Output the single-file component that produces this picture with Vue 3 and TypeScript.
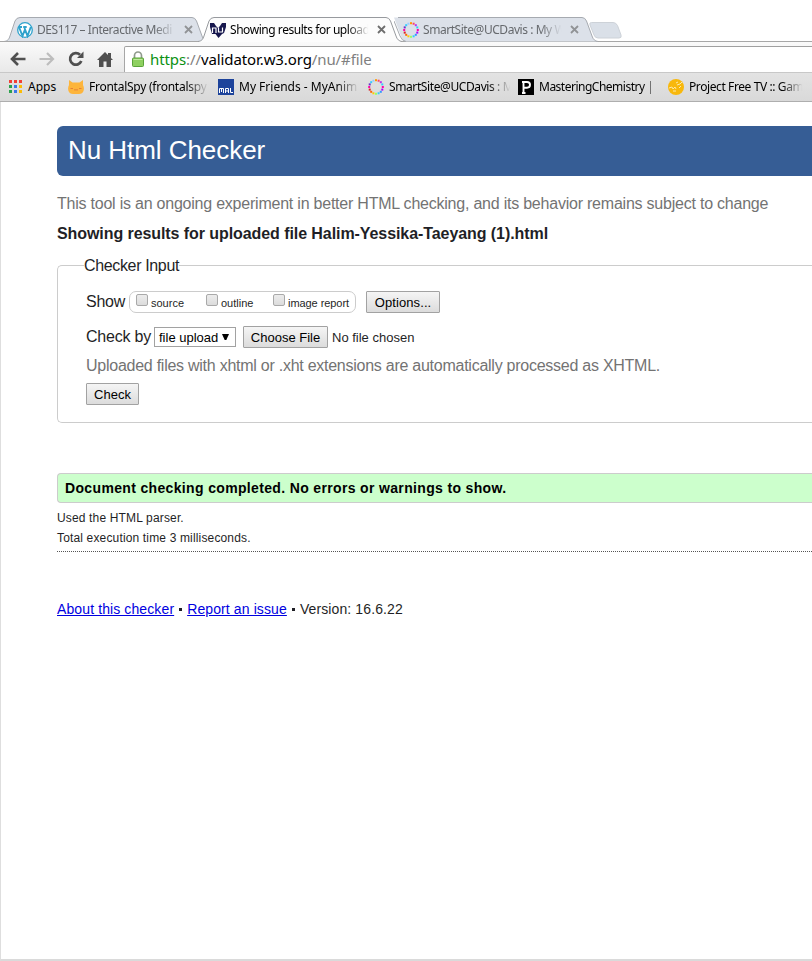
<script setup lang="ts">
const colors = ['#f0a', '#a0f', '#39f', '#3cf', '#9f6', '#fc0', '#f60', '#d22', '#f0a', '#63c', '#3cf', '#9cf', '#f90', '#f46', '#b3e', '#3cf']
const dots = colors.map((c, i) => ({ c, x: 8 + 6.8 * Math.cos((i * Math.PI) / 8), y: 8 + 6.8 * Math.sin((i * Math.PI) / 8) }))
const apps = ['#f33f34', '#f33f34', '#f33f34', '#2ba24c', '#3b78e7', '#fbbc05', '#2ba24c', '#3b78e7', '#fbbc05']
const bookmarks = [
  { kind: 'apps', label: 'Apps' },
  { kind: 'cat', label: 'FrontalSpy (frontalspy' },
  { kind: 'mal', label: 'My Friends - MyAnim' },
  { kind: 'ring', label: 'SmartSite@UCDavis : M' },
  { kind: 'p', label: 'MasteringChemistry |' },
  { kind: 'tv', label: 'Project Free TV :: Gam' },
]
</script>

<template>
  <div class="window">
    <header class="chrome">
      <div class="tabs">
        <div class="tab idle first">
          <svg class="shape" width="204" height="25" viewBox="0 0 204 25"><path d="M0 24.5C4 24 5 22 6 19L11 4Q12.5 .5 16 .5H188Q191 .5 192.5 4L198 19Q199.5 24 204 24.5" fill="#dce1e9" stroke="#a6aab0" /></svg>
          <svg class="fav" viewBox="0 0 16 16"><circle cx="8" cy="8" r="7.3" fill="#fff" stroke="#2ea2cc" stroke-width="1.3" /><path d="M2 5L5.5 14L8 7.5L10.5 14L13.8 5M1.800 5H5M6.200 5H9.700M8 7L7.200 5" fill="none" stroke="#2ea2cc" stroke-width="1.9" /></svg>
          <div class="tt"><span>DES117 – Interactive Medi</span></div>
          <svg class="x" viewBox="0 0 9 9"><path d="M1 1L8 8M8 1L1 8" /></svg>
        </div>
        <div class="tab active">
          <svg class="shape" width="206" height="25" viewBox="0 0 206 25"><path d="M0 24.5C4 24 5 22 6 19L11 4Q12.5 .5 16 .5H188Q191 .5 192.5 4L198 19Q199.5 24 204 24.5V25H0Z" fill="#fcfcfc" /><path d="M0 24.5C4 24 5 22 6 19L11 4Q12.5 .5 16 .5H188Q191 .5 192.5 4L198 19Q199.5 24 204 24.5" fill="none" stroke="#979a9e" /></svg>
          <svg class="fav" viewBox="0 0 16 16"><path d="M0 1H4L6 4L8 6L10 4L12 1H16V5L14 11L12 12L8.5 16L5.5 12H2L0 5Z" fill="#17174d" /><path d="M2.500 11V6H6V11M8.500 5.500V10H12.500V5.500" fill="none" stroke="#fff" stroke-width="1.2" /></svg>
          <div class="tt"><span>Showing results for upload</span></div>
          <svg class="x" viewBox="0 0 9 9"><path d="M1 1L8 8M8 1L1 8" /></svg>
        </div>
        <div class="tab idle third">
          <svg class="shape" width="204" height="25" viewBox="0 0 204 25"><path d="M0 .5L7 19Q8.5 24 12 24.5H204C200 24 199 22 198 19L192.5 4Q191 .5 188 .5H4Q2 .5 0 .5" fill="#dce1e9" /><path d="M0 4L6 19Q8 24 12 24.5M4 .5H188Q191 .5 192.5 4L198 19Q199.5 24 204 24.5" fill="none" stroke="#a6aab0" /></svg>
          <svg class="fav" viewBox="0 0 16 16"><rect v-for="(d, i) in dots" :key="i" :x="d.x - 1" :y="d.y - 1" width="2" height="2" :fill="d.c" /></svg>
          <div class="tt"><span>SmartSite@UCDavis : My W</span></div>
          <svg class="x" viewBox="0 0 9 9"><path d="M1 1L8 8M8 1L1 8" /></svg>
        </div>
        <svg class="newtab" width="33" height="17" viewBox="0 0 33 17"><path d="M2.5 .5H24Q27 .5 28.5 3.5L32 13Q33 16 30 16H9Q6 16 5 13L1 3Q0 .5 2.5 .5" fill="#dae0e8" stroke="#cdd2d8" /></svg>
      </div>

      <div class="toolbar">
        <div class="nav">
          <svg width="16" height="14" viewBox="0 0 16 14"><path d="M8 1L2 7L8 13M2.5 7H15.5" fill="none" stroke="#505050" stroke-width="2.6" /></svg>
          <svg width="16" height="14" viewBox="0 0 16 14"><path d="M8 1L14 7L8 13M13.5 7H.5" fill="none" stroke="#bdbdbd" stroke-width="2.2" /></svg>
          <svg width="16" height="16" viewBox="0 0 16 16"><path d="M13.300 10A5.800 5.800 0 1 1 12 3.800" fill="none" stroke="#505050" stroke-width="2.7" /><path d="M15.5 .5V7H9Z" fill="#505050" /></svg>
          <svg width="16" height="15" viewBox="0 0 16 15"><path d="M8 0L11 3V1H14V6L16 8H14V15H9.5V9.5H6.5V15H2V8H0Z" fill="#505050" /></svg>
        </div>
        <div class="omni">
          <svg width="12" height="16" viewBox="0 0 12 16"><path d="M2.5 8V4.500A3.500 3.500 0 0 1 9.500 4.500V8" fill="none" stroke="#8f9a8c" stroke-width="1.7" /><rect x=".5" y="7" width="11" height="8.5" rx="1" fill="#8ed060" stroke="#5aa33a" /><path d="M1.500 8.500H10.500" stroke="#c0e8a0" /></svg>
          <div class="url"><span class="g">https</span><span class="m">://</span>validator.w3.org<span class="m">/nu/#file</span></div>
        </div>
      </div>

      <div class="marks">
        <div v-for="b in bookmarks" :key="b.kind" class="mark" :class="b.kind">
          <svg class="fav" viewBox="0 0 16 16">
            <template v-if="b.kind === 'apps'"><rect v-for="(c, i) in apps" :key="i" :x="2 + (i % 3) * 5" :y="1 + Math.floor(i / 3) * 5" width="3" height="3" :fill="c" /></template>
            <template v-else-if="b.kind === 'cat'"><path d="M1 1L4.500 3.500H11.500L15 1V6Q16.500 9 15.500 12Q14.500 15 11 15H5Q1.500 15 .5 12Q-.5 9 1 6Z" fill="#fdb53c" /><path d="M2.500 9.500H5M11 9.500H13.500M6 10.500Q7 12 8 10.500Q9 12 10 10.500" fill="none" stroke="#e8803a" /></template>
            <template v-else-if="b.kind === 'mal'"><rect width="16" height="16" fill="#1d439b" /><path d="M1.500 14V9.500H5.500V14M3.500 9.500V13M7.500 14V9.500H10.500V14M7.500 12H10.500M12.500 9V13.500H15" fill="none" stroke="#fff" /></template>
            <template v-else-if="b.kind === 'ring'"><rect v-for="(d, i) in dots" :key="i" :x="d.x - 1" :y="d.y - 1" width="2" height="2" :fill="d.c" /></template>
            <template v-else-if="b.kind === 'p'"><rect width="16" height="16" fill="#000" /><path d="M5.500 14V3H9Q12 3 12 5.800Q12 8.700 9 8.700H6M4 14H7.500M4 3H6" fill="none" stroke="#fff" stroke-width="1.9" /></template>
            <template v-else><circle cx="8" cy="8" r="8" fill="#f8b80c" /><path d="M1 9L4 8L5 10L7 8L8 10M9 6L12 5L14 3M8 4L10 3M5 12L8 12M11 9L13 7" fill="none" stroke="#fde9a8" /></template>
          </svg>
          <div class="ml"><span>{{ b.label }}</span></div>
        </div>
      </div>
    </header>

    <main class="page">
      <h1>Nu Html Checker</h1>
      <p class="intro">This tool is an ongoing experiment in better HTML checking, and its behavior remains subject to change</p>
      <h2>Showing results for uploaded file Halim-Yessika-Taeyang (1).html</h2>
      <fieldset>
        <legend>Checker Input</legend>
        <div class="row show">
          <span class="w1">Show</span>
          <div class="checks">
            <label class="c1"><i class="box" /><span>source</span></label>
            <label class="c2"><i class="box" /><span>outline</span></label>
            <label class="c3"><i class="box" /><span>image report</span></label>
          </div>
          <button class="opt">Options...</button>
        </div>
        <div class="row by">
          <span class="w2">Check by</span>
          <div class="select"><span>file upload</span><svg width="7" height="6" viewBox="0 0 7 6"><path d="M0 0H7L4.3 6H2.7Z" /></svg></div>
          <button class="choose">Choose File</button>
          <span class="none">No file chosen</span>
        </div>
        <p class="hint">Uploaded files with xhtml or .xht extensions are automatically processed as XHTML.</p>
        <button class="check">Check</button>
      </fieldset>
      <div class="success">Document checking completed. No errors or warnings to show.</div>
      <div class="stats">
        <p>Used the HTML parser.</p>
        <p>Total execution time 3 milliseconds.</p>
      </div>
      <footer><a>About this checker</a><b class="sq" /><a>Report an issue</a><b class="sq" /><span>Version: 16.6.22</span></footer>
    </main>
  </div>
</template>

<style>
body { margin: 0; background: #fff; }
</style>

<style scoped>
* { box-sizing: border-box; }
.window { width: 812px; height: 961px; overflow: hidden; display: flex; flex-direction: column; background: #fff; font-family: "Liberation Sans", Arial, sans-serif; color: #1f1f26; white-space: nowrap; }
.chrome { flex: none; height: 102px; border-bottom: 1px solid #aeaeae; font-family: "Noto Sans", sans-serif; color: #000; }
.tabs { height: 41px; padding: 17px 0 0 4px; display: flex; }
.tab { position: relative; flex: none; height: 25px; display: flex; align-items: center; font-size: 12px; letter-spacing: -0.45px; }
.shape { position: absolute; left: 0; top: 0; }
.fav { position: relative; width: 16px; height: 16px; flex: none; }
.tab .tt { position: relative; width: 140px; margin-left: 4px; mask-image: linear-gradient(to right, #000 84%, transparent 99%); }
.x { position: relative; width: 9px; height: 9px; margin-left: 7px; }
.x path { stroke: #6e6e6e; stroke-width: 1.8; fill: none; }
.idle { color: #66696d; }
.idle .x path { stroke: #919396; }
.first { width: 194px; padding-left: 13px; }
.active { width: 196px; padding-left: 12px; z-index: 2; }
.third { width: 198px; padding-left: 9px; z-index: 1; }
.newtab { margin: 5px 0 0 -3px; }
.toolbar { position: relative; height: 31px; display: flex; border-top: 1px solid #a7a7a7; background: linear-gradient(#fafafa, #e9e9e9); }
.nav { width: 124px; display: flex; align-items: center; gap: 13px; padding: 4px 0 0 10px; }
.omni { flex: 1; margin-top: 4px; border-top: 1px solid #a0a0a0; border-left: 1px solid #a7a7a7; background: #fff; border-radius: 2px 0 0 0; display: flex; align-items: center; padding: 0 0 2px 7px; }
.url { margin-left: 6px; font-size: 15px; letter-spacing: -0.1px; }
.g { color: #0b9112; }
.m { color: #808080; }
.marks { height: 29px; display: flex; border-top: 1px solid #c8c8c8; background: linear-gradient(#e3e3e3, #d9d9d9); font-size: 12px; padding-bottom: 1px; }
.mark { flex: none; display: flex; align-items: center; gap: 5px; }
.ml { flex: 1; mask-image: linear-gradient(to right, #000 80%, transparent 98%); }
.apps { width: 61px; padding-left: 7px; }
.apps .ml { mask-image: none; }
.p .ml { mask-image: linear-gradient(to right, #000 85%, transparent); }
.cat { width: 143px; margin-left: 7px; letter-spacing: -0.25px; }
.mal { width: 143px; margin-left: 7px; }
.ring { width: 143px; margin-left: 7px; letter-spacing: -0.4px; }
.p { width: 143px; margin-left: 7px; letter-spacing: -0.5px; }
.tv { width: 137px; margin-left: 7px; letter-spacing: -0.4px; }
.page { flex: 1; border-left: 1px solid #dedede; border-bottom: 2px solid #dadada; padding: 24px 0 0 56px; overflow: hidden; }
h1, h2, p { margin: 0; font-weight: 400; }
h1 { height: 50px; background: #365d95; border-radius: 6px 0 0 6px; color: #fff; font-size: 26px; line-height: 48px; padding-left: 11px; letter-spacing: -0.05px; }
.intro { margin-top: 18px; font-size: 16px; line-height: 20px; color: #737373; letter-spacing: -0.224px; }
h2 { margin-top: 10px; font-size: 16px; line-height: 20px; font-weight: 700; letter-spacing: -0.075px; }
fieldset { margin: 12px 0 0; min-width: 0; height: 167px; padding: 0 0 0 28px; border: 1px solid #ccc; border-right: 0; border-radius: 5px 0 0 5px; font-size: 16px; }
legend { margin-left: -2px; padding: 0; height: 19px; line-height: 20px; letter-spacing: -0.35px; }
.row { display: flex; align-items: center; height: 22px; }
.show { margin-top: 16px; }
.w1 { width: 39px; letter-spacing: -0.25px; }
.w2 { width: 65px; letter-spacing: -0.2px; }
.by { margin-top: 13px; }
.checks { height: 22px; width: 227px; margin-left: 4px; border: 1px solid #ccc; border-radius: 7px; display: flex; align-items: center; padding-left: 6px; font-size: 11px; }
label { display: flex; align-items: center; gap: 3px; }
label span { padding-top: 2px; }
.c1 { width: 70px; }
.c2 { width: 67px; }
.c3 { letter-spacing: -0.06px; }
.box { width: 12px; height: 12px; margin-top: -4px; border: 1px solid #a9a9a9; border-radius: 2px; background: linear-gradient(#ececec, #dcdcdc); }
button { height: 22px; padding: 0; border: 1px solid #a2a2a2; border-radius: 1px; background: linear-gradient(#f5f5f5, #dcdcdc); font: 13px "Liberation Sans", Arial, sans-serif; color: #000; text-align: center; }
.opt { width: 74px; margin-left: 10px; letter-spacing: 0.1px; }
.select { margin-left: 3px; width: 82px; height: 20px; border: 1px solid #a2a2a2; display: flex; align-items: center; justify-content: space-between; padding: 0 6px 0 4px; font-size: 13px; color: #000; }
.choose { width: 85px; margin-left: 7px; }
.none { margin-left: 4px; font-size: 13px; }
.hint { margin-top: 8px; line-height: 20px; color: #737373; letter-spacing: -0.255px; }
.check { display: block; width: 53px; margin-top: 7px; }
.success { margin-top: 50px; height: 30px; border: 1px solid #ccc; border-right: 0; border-radius: 4px 0 0 4px; background: #cfc; color: #000; font-size: 14px; font-weight: 700; line-height: 28px; padding-left: 7px; letter-spacing: 0.345px; }
.stats { height: 49px; padding-top: 5px; border-bottom: 1px dotted #555; font-size: 12px; line-height: 20px; letter-spacing: 0.155px; }
footer { margin-top: 47px; display: flex; align-items: center; font-size: 14px; line-height: 20px; letter-spacing: 0.11px; }
a { color: #0000e0; text-decoration: underline; }
.sq { width: 3px; height: 3px; margin: 0 5px; background: #1f1f26; }
</style>
